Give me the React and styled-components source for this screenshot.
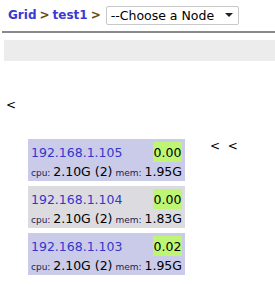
import React from "react";
import styled, { createGlobalStyle } from "styled-components";

const Global = createGlobalStyle`
  html, body { margin: 0; padding: 0; background: #fff; }
  body { font-family: "DejaVu Sans", Verdana, sans-serif; color: #000; }
`;

const Page = styled.div`
  width: 275px;
  height: 285px;
  overflow: hidden;
`;

const Header = styled.div`
  display: flex;
  align-items: center;
  height: 30px;
  padding-left: 8px;
  gap: 3px;
  font-size: 12px;
  font-weight: bold;
`;

const Crumb = styled.a`
  color: #3a3ad0;
  text-decoration: none;
`;

const Sep = styled.span`
  color: #6b4a10;
`;

const Select = styled.div`
  box-sizing: border-box;
  width: 133px;
  height: 19px;
  margin-left: 2px;
  border: 1px solid #c8c8c8;
  border-radius: 2px;
  display: flex;
  align-items: center;
  justify-content: space-between;
  padding: 0 5px 0 4px;
  font-weight: normal;
  font-size: 12.5px;
  background: #fff;
`;

const Caret = styled.span`
  width: 0;
  height: 0;
  border-left: 4px solid transparent;
  border-right: 4px solid transparent;
  border-top: 4px solid #222;
`;

const Rule = styled.div`
  margin: 1px 0 0 2px;
  height: 2px;
  background: #8a8a8a;
`;

const Bar = styled.div`
  margin: 7px 0 0 4px;
  height: 21px;
  background: #ececec;
`;

const Back = styled.div`
  margin: 37px 0 0 6px;
  font-size: 12px;
  line-height: 14px;
  height: 14px;
`;

const Row = styled.div`
  display: flex;
  align-items: flex-start;
  margin-top: 27px;
  padding-left: 28px;
`;

const Cards = styled.div`
  display: flex;
  flex-direction: column;
  gap: 5px;
`;

const Card = styled.div`
  box-sizing: border-box;
  width: 157px;
  height: 42px;
  background: ${(p) => (p.$gray ? "#dcdce0" : "#c9cbe9")};
  padding: 3px 3px 0 3px;
`;

const Top = styled.div`
  display: flex;
  justify-content: space-between;
  align-items: center;
  height: 20px;
`;

const Ip = styled.a`
  color: #3535cc;
  font-size: 12.5px;
  text-decoration: none;
`;

const Load = styled.span`
  background: #bff574;
  height: 20px;
  width: 29px;
  display: flex;
  align-items: center;
  justify-content: center;
  font-size: 12.5px;
`;

const Stats = styled.div`
  display: flex;
  justify-content: space-between;
  align-items: baseline;
  margin-top: 2px;
  font-size: 12.5px;
  white-space: nowrap;
`;

const Label = styled.span`
  font-size: 9px;
  color: #222250;
`;

const Nav = styled.div`
  margin: 0 0 0 25px;
  font-size: 12px;
  letter-spacing: 2px;
`;

const hosts = [
  { ip: "192.168.1.105", load: "0.00", mem: "1.95G" },
  { ip: "192.168.1.104", load: "0.00", mem: "1.83G", gray: true },
  { ip: "192.168.1.103", load: "0.02", mem: "1.95G" },
];

export default function App() {
  return (
    <Page>
      <Global />
      <Header>
        <Crumb href="#">Grid</Crumb>
        <Sep>&gt;</Sep>
        <Crumb href="#">test1</Crumb>
        <Sep>&gt;</Sep>
        <Select>
          <span>--Choose a Node</span>
          <Caret />
        </Select>
      </Header>
      <Rule />
      <Bar />
      <Back>&lt;</Back>
      <Row>
        <Cards>
          {hosts.map((h) => (
            <Card key={h.ip} $gray={h.gray}>
              <Top>
                <Ip href="#">{h.ip}</Ip>
                <Load>{h.load}</Load>
              </Top>
              <Stats>
                <span>
                  <Label>cpu: </Label>2.10G (2)
                </span>
                <span>
                  <Label>mem: </Label>
                  {h.mem}
                </span>
              </Stats>
            </Card>
          ))}
        </Cards>
        <Nav>&lt; &lt;</Nav>
      </Row>
    </Page>
  );
}
